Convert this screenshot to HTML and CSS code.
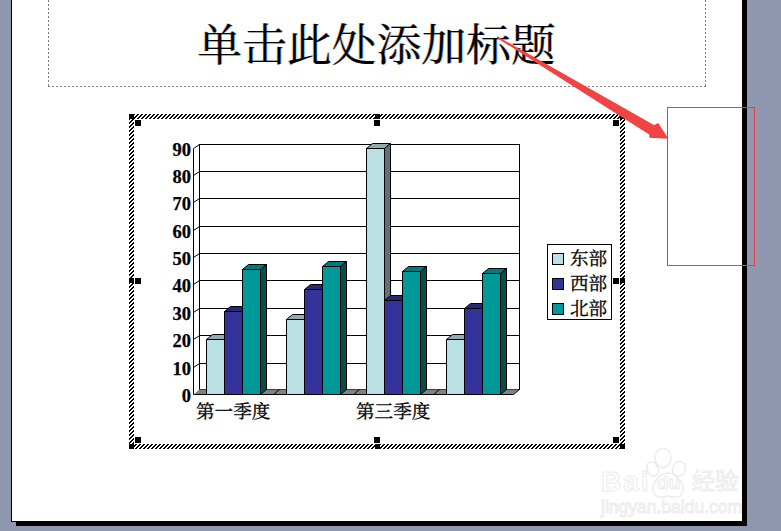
FILE: index.html
```html
<!DOCTYPE html>
<html lang="zh">
<head>
<meta charset="utf-8">
<title>单击此处添加标题</title>
<link rel="stylesheet" href="styles.css">
</head>
<body>
<main class="slide">
  <header class="title-box"><h1 class="title">单击此处添加标题</h1></header>
  <section class="chart-frame">
    <div class="chart-inner">
      <svg class="chart" viewBox="134 119 486 325" width="486" height="325">
        <rect class="wall" x="199.5" y="144.5" width="320" height="245"/>
        <path class="line" d="M193.5 148.5L199.5 144.5M193.5 175.5L199.5 171.5H519.5M193.5 202.5L199.5 198.5H519.5M193.5 230.5L199.5 226.5H519.5M193.5 257.5L199.5 253.5H519.5M193.5 284.5L199.5 280.5H519.5M193.5 312.5L199.5 308.5H519.5M193.5 339.5L199.5 335.5H519.5M193.5 367.5L199.5 363.5H519.5M193.5 148.5V394.5"/>
        <polygon class="floor" points="193.5,394.5 199.5,389.5 519.5,389.5 513.5,394.5"/>
        <path class="line" d="M273.5 394.5L279.5 389.5M353.5 394.5L359.5 389.5M433.5 394.5L439.5 389.5"/>

        <g class="bar-light">
          <polygon class="top" points="206.5,339.5 212.5,334.5 230.5,334.5 224.5,339.5"/>
          <rect x="206.5" y="339.5" width="18" height="55"/>
        </g>
        <g class="bar-blue">
          <polygon class="top" points="224.5,311.5 230.5,306.5 248.5,306.5 242.5,311.5"/>
          <rect x="224.5" y="311.5" width="18" height="83"/>
        </g>
        <g class="bar-teal">
          <polygon class="top" points="242.5,269.5 248.5,264.5 266.5,264.5 260.5,269.5"/>
          <polygon class="side" points="260.5,269.5 266.5,264.5 266.5,389.5 260.5,394.5"/>
          <rect x="242.5" y="269.5" width="18" height="125"/>
        </g>

        <g class="bar-light">
          <polygon class="top" points="286.5,319.5 292.5,314.5 310.5,314.5 304.5,319.5"/>
          <rect x="286.5" y="319.5" width="18" height="75"/>
        </g>
        <g class="bar-blue">
          <polygon class="top" points="304.5,289.5 310.5,284.5 328.5,284.5 322.5,289.5"/>
          <rect x="304.5" y="289.5" width="18" height="105"/>
        </g>
        <g class="bar-teal">
          <polygon class="top" points="322.5,266.5 328.5,261.5 346.5,261.5 340.5,266.5"/>
          <polygon class="side" points="340.5,266.5 346.5,261.5 346.5,389.5 340.5,394.5"/>
          <rect x="322.5" y="266.5" width="18" height="128"/>
        </g>

        <g class="bar-light">
          <polygon class="top" points="366.5,148.5 372.5,143.5 390.5,143.5 384.5,148.5"/>
          <polygon class="side" points="384.5,148.5 390.5,143.5 390.5,389.5 384.5,394.5"/>
          <rect x="366.5" y="148.5" width="18" height="246"/>
        </g>
        <g class="bar-blue">
          <polygon class="top" points="384.5,300.5 390.5,295.5 408.5,295.5 402.5,300.5"/>
          <rect x="384.5" y="300.5" width="18" height="94"/>
        </g>
        <g class="bar-teal">
          <polygon class="top" points="402.5,271.5 408.5,266.5 426.5,266.5 420.5,271.5"/>
          <polygon class="side" points="420.5,271.5 426.5,266.5 426.5,389.5 420.5,394.5"/>
          <rect x="402.5" y="271.5" width="18" height="123"/>
        </g>

        <g class="bar-light">
          <polygon class="top" points="446.5,339.5 452.5,334.5 470.5,334.5 464.5,339.5"/>
          <rect x="446.5" y="339.5" width="18" height="55"/>
        </g>
        <g class="bar-blue">
          <polygon class="top" points="464.5,308.5 470.5,303.5 488.5,303.5 482.5,308.5"/>
          <rect x="464.5" y="308.5" width="18" height="86"/>
        </g>
        <g class="bar-teal">
          <polygon class="top" points="482.5,273.5 488.5,268.5 506.5,268.5 500.5,273.5"/>
          <polygon class="side" points="500.5,273.5 506.5,268.5 506.5,389.5 500.5,394.5"/>
          <rect x="482.5" y="273.5" width="18" height="121"/>
        </g>

        <path class="line" d="M193.5 394.5H513.5L519.5 389.5"/>

        <g class="axis-num">
          <text x="191" y="156">90</text>
          <text x="191" y="183">80</text>
          <text x="191" y="210">70</text>
          <text x="191" y="238">60</text>
          <text x="191" y="265">50</text>
          <text x="191" y="292">40</text>
          <text x="191" y="320">30</text>
          <text x="191" y="347">20</text>
          <text x="191" y="375">10</text>
          <text x="191" y="402">0</text>
        </g>
        <g class="cat-label">
          <text x="196" y="418">第一季度</text>
          <text x="356" y="418">第三季度</text>
        </g>

        <rect class="legend" x="547.5" y="244.5" width="64" height="75"/>
        <rect class="swatch-light" x="552.5" y="253.5" width="11" height="11"/>
        <rect class="swatch-blue" x="552.5" y="278.5" width="11" height="11"/>
        <rect class="swatch-teal" x="552.5" y="303.5" width="11" height="11"/>
        <g class="legend-label">
          <text x="570" y="265">东部</text>
          <text x="570" y="290">西部</text>
          <text x="570" y="315">北部</text>
        </g>
      </svg>
    </div>
    <i class="handle outer tl"></i><i class="handle outer tm"></i><i class="handle outer tr"></i>
    <i class="handle outer ml"></i><i class="handle outer mr"></i>
    <i class="handle outer bl"></i><i class="handle outer bm"></i><i class="handle outer br"></i>
    <i class="handle inner tl"></i><i class="handle inner tm"></i><i class="handle inner tr"></i>
    <i class="handle inner ml"></i><i class="handle inner mr"></i>
    <i class="handle inner bl"></i><i class="handle inner bm"></i><i class="handle inner br"></i>
  </section>
</main>

<div class="red-box"></div>
<svg class="arrow" viewBox="0 0 781 531" width="781" height="531">
  <polygon points="497,37 654,126 658,124 667,138 650,137 650,134"/>
</svg>

<aside class="watermark">
  <span class="wm-bai">Bai</span>
  <svg class="wm-paw" viewBox="0 0 44 54" width="44" height="54">
    <ellipse cx="8.5" cy="22" rx="5.5" ry="7.5" transform="rotate(-20 8.5 22)"/>
    <ellipse cx="19" cy="11" rx="8" ry="9.5"/>
    <ellipse cx="35" cy="22" rx="6.5" ry="7.5" transform="rotate(20 35 22)"/>
    <path d="M24 26C32 26 40 36 39 44C38 51 30 51 24 49C18 51 10 51 9 44C8 36 16 26 24 26Z"/>
  </svg>
  <span class="wm-du">du</span>
  <span class="wm-cn">经验</span>
  <span class="wm-url">jingyan.baidu.com</span>
</aside>
</body>
</html>
```

FILE: styles.css
```css
* { box-sizing: border-box; }
html, body { margin: 0; padding: 0; }
body {
  position: relative;
  width: 781px;
  height: 531px;
  overflow: hidden;
  background: #8f97ae;
}
.slide {
  margin: -20px 0 0 11px;
  width: 731px;
  height: 542px;
  background: #fff;
  border-left: 1px solid #000;
  border-bottom: 1px solid #000;
  box-shadow: 5px 4px 0 #000;
  padding-left: 36px;
  display: flex;
  flex-direction: column;
  align-items: flex-start;
}
.title-box {
  width: 658px;
  height: 107px;
  background:
    linear-gradient(90deg, #808080 2px, transparent 2px) left bottom / 4px 1px repeat-x,
    linear-gradient(180deg, #808080 2px, transparent 2px) left top / 1px 4px repeat-y,
    linear-gradient(180deg, #808080 2px, transparent 2px) right top / 1px 4px repeat-y;
  display: flex;
  justify-content: center;
  align-items: center;
  padding-top: 17px;
  flex: none;
}
.title {
  margin: 0 0 0 -1px;
  font: 400 44.8px/1 "Noto Serif CJK SC", "Noto Sans CJK SC", serif;
  color: #000;
  white-space: nowrap;
  text-shadow: .7px 0 rgba(0, 120, 255, .55), -.7px 0 rgba(255, 140, 0, .55);
}
.chart-frame {
  position: relative;
  margin: 27px 0 0 81px;
  width: 496px;
  height: 335px;
  padding: 5px;
  flex: none;
  background: repeating-linear-gradient(-45deg, #000 0, #000 1.42px, #fff 1.42px, #fff 2.83px);
}
.chart-inner { width: 486px; height: 325px; background: #fff; }
.chart { display: block; }

.wall { fill: #fff; stroke: #000; }
.line { fill: none; stroke: #000; stroke-width: 1; }
.floor { fill: #808080; stroke: none; }
.bar-light rect, .swatch-light { fill: #bbe0e3; stroke: #000; }
.bar-light .top { fill: #8fabae; stroke: #000; }
.bar-light .side { fill: #5f7375; stroke: #000; }
.bar-blue rect, .swatch-blue { fill: #333399; stroke: #000; }
.bar-blue .top { fill: #28287a; stroke: #000; }
.bar-teal rect, .swatch-teal { fill: #009999; stroke: #000; }
.bar-teal .top { fill: #007a7a; stroke: #000; }
.bar-teal .side { fill: #005050; stroke: #000; }
.legend { fill: #fff; stroke: #000; }

.axis-num text {
  font: 700 18.5px "Liberation Serif", serif;
  text-anchor: end;
  fill: #000;
  stroke: #000;
  stroke-width: .25px;
}
.cat-label text, .legend-label text {
  font: 400 18.6px "Noto Serif CJK SC", "Noto Sans CJK SC", serif;
  fill: #000;
  stroke: #000;
  stroke-width: .3px;
}

.handle { position: absolute; display: block; background: #000; }
.handle.outer { width: 5px; height: 5px; }
.handle.inner { width: 6px; height: 6px; }
.outer.tl, .outer.tm, .outer.tr { top: 0; }
.outer.ml, .outer.mr { top: 164px; }
.outer.bl, .outer.bm, .outer.br { top: 330px; }
.outer.tl, .outer.ml, .outer.bl { left: 0; }
.outer.tm, .outer.bm { left: 246px; }
.outer.tr, .outer.mr, .outer.br { left: 491px; }
.inner.tl, .inner.tm, .inner.tr { top: 6px; }
.inner.ml, .inner.mr { top: 164px; }
.inner.bl, .inner.bm, .inner.br { top: 323px; }
.inner.tl, .inner.ml, .inner.bl { left: 6px; }
.inner.tm, .inner.bm { left: 245px; }
.inner.tr, .inner.mr, .inner.br { left: 484px; }

.red-box {
  position: absolute;
  left: 667px;
  top: 107px;
  width: 88px;
  height: 159px;
  border: 1px solid #e84040;
}
.arrow { position: absolute; left: 0; top: 0; }
.arrow polygon { fill: #f04444; stroke: #f04444; stroke-width: 1.5; stroke-linejoin: miter; }

.watermark {
  position: absolute;
  left: 0;
  top: 0;
  width: 781px;
  height: 531px;
  color: #fff;
  -webkit-text-stroke: 1px #ececec;
  font-family: "Liberation Sans", sans-serif;
  pointer-events: none;
}
.watermark span { position: absolute; white-space: nowrap; }
.wm-bai { left: 601px; top: 464px; font-size: 28px; line-height: 36px; font-weight: 700; letter-spacing: 2px; }
.wm-du { left: 657px; top: 472px; font-size: 19px; line-height: 22px; font-weight: 700; }
.wm-cn { left: 692px; top: 466px; font-size: 23px; line-height: 26px; font-family: "Noto Sans CJK SC", sans-serif; }
.wm-url { left: 601px; top: 498px; font-size: 17.5px; line-height: 18px; }
.wm-paw { position: absolute; left: 644px; top: 447px; }
.wm-paw ellipse, .wm-paw path { fill: none; stroke: #ececec; stroke-width: 1.5; }
```
